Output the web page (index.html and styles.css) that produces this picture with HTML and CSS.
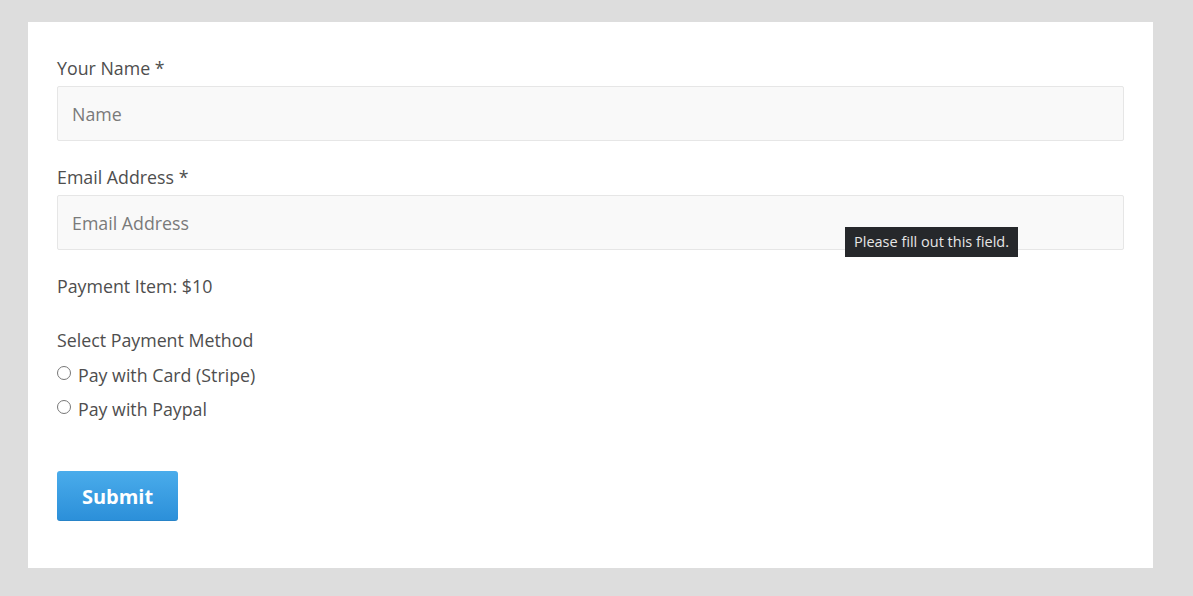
FILE: index.html
```html
<!DOCTYPE html>
<html>
<head>
<meta charset="utf-8">
<link rel="stylesheet" href="styles.css">
</head>
<body>
<div class="page">
  <form class="card">
    <div class="field">
      <label class="label">Your Name *</label>
      <input class="input" type="text" placeholder="Name">
    </div>
    <div class="field field-email">
      <label class="label">Email Address *</label>
      <input class="input" type="text" placeholder="Email Address">
      <div class="tooltip">Please fill out this field.</div>
    </div>
    <p class="item">Payment Item: $10</p>
    <div class="methods">
      <p class="method-title">Select Payment Method</p>
      <label class="radio"><span class="dot"></span>Pay with Card (Stripe)</label>
      <label class="radio"><span class="dot"></span>Pay with Paypal</label>
    </div>
    <button class="submit" type="button">Submit</button>
  </form>
</div>
</body>
</html>
```

FILE: styles.css
```css
html, body {
  margin: 0;
  padding: 0;
}
body {
  background: #dddddd;
  font-family: "Open Sans", "Noto Sans", sans-serif;
  color: #4e4e4e;
}
.page {
  padding: 22px 40px 28px 28px;
}
.card {
  background: #ffffff;
  width: 1125px;
  height: 546px;
  box-sizing: border-box;
  padding: 33px 29px 0 29px;
  display: flex;
  flex-direction: column;
}
.field {
  display: flex;
  flex-direction: column;
  margin-bottom: 23px;
  position: relative;
}
.label {
  font-size: 17.8px;
  line-height: 26px;
  margin-bottom: 5px;
}
.input {
  height: 55px;
  box-sizing: border-box;
  border: 1px solid #e6e6e6;
  border-radius: 2px;
  background: #f9f9f9;
  padding: 0 14px;
  font-family: inherit;
  font-size: 17.8px;
  color: #555;
  outline: none;
}
.input::placeholder {
  color: #7a7a7a;
}
.tooltip {
  position: absolute;
  left: 788px;
  top: 63px;
  background: #26282b;
  color: #e6e6e6;
  font-size: 14.5px;
  line-height: 30px;
  padding: 0 9px;
  white-space: nowrap;
}
.item {
  margin: 0;
  font-size: 17.8px;
  line-height: 26px;
}
.methods {
  margin-top: 28px;
  display: flex;
  flex-direction: column;
}
.method-title {
  margin: 0;
  font-size: 17.8px;
  line-height: 26px;
  margin-bottom: 5px;
}
.radio {
  display: flex;
  align-items: center;
  font-size: 17.8px;
  line-height: 26px;
  height: 34px;
}
.dot {
  width: 14px;
  height: 14px;
  border: 1px solid #777;
  border-radius: 50%;
  box-sizing: border-box;
  margin: -4px 7px 0 0;
  background: #fff;
}
.submit {
  margin-top: 45px;
  width: 121px;
  height: 50px;
  border: none;
  border-radius: 3px;
  background: linear-gradient(#4aaceb, #2b8fd9);
  color: #fff;
  font-family: inherit;
  font-weight: 700;
  font-size: 20px;
  padding: 0;
  box-shadow: inset 0 -1px 0 rgba(0,0,0,0.08);
}
```
